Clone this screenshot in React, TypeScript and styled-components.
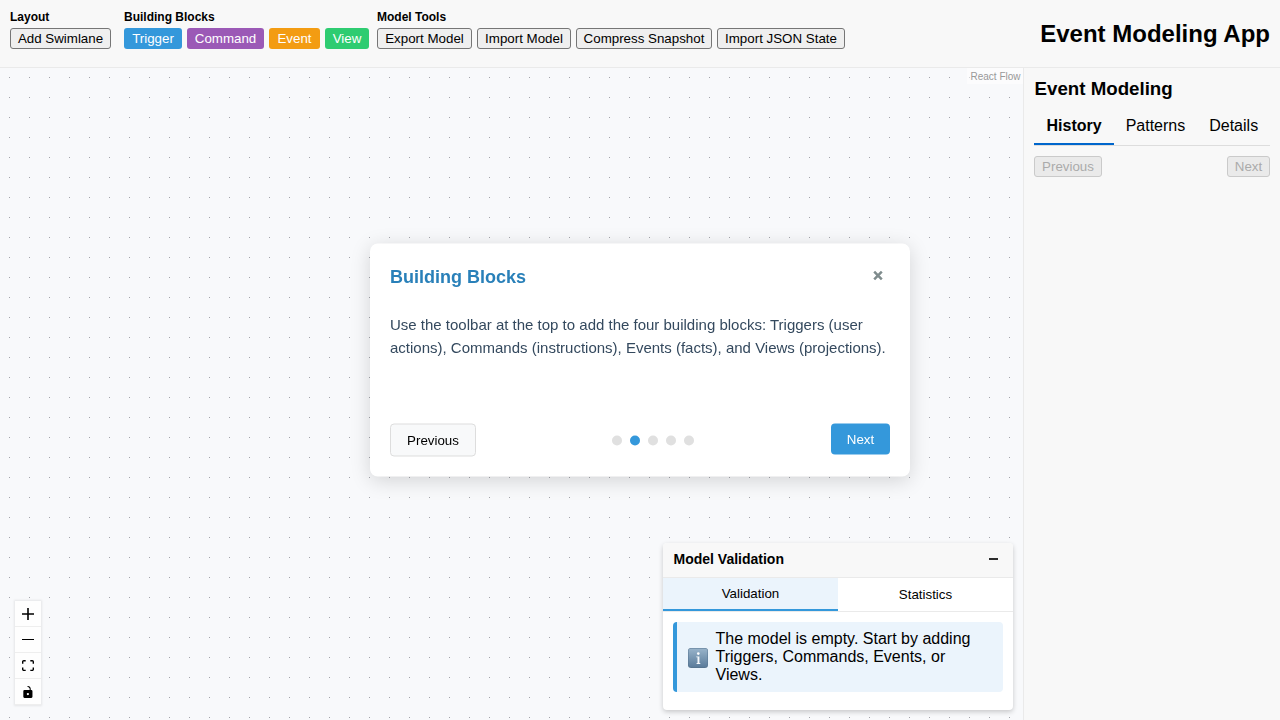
import React from "react";
import styled, { createGlobalStyle, css } from "styled-components";

const GlobalStyle = createGlobalStyle`
  * { box-sizing: border-box; }
  body {
    margin: 0;
    overflow: hidden;
    color: #000;
    font-family: "Liberation Sans", Arial, sans-serif;
    font-size: 16px;
  }
  button { font-family: inherit; margin: 0; color: inherit; white-space: nowrap; }
`;

const AppShell = styled.div`
  display: flex;
  flex-direction: column;
  width: 100vw;
  height: 100vh;
`;

const Header = styled.header`
  display: flex;
  justify-content: space-between;
  height: 68px;
  padding: 10px;
  background: #f8f8f8;
  border-bottom: 1px solid #eaeaea;
`;

const Toolbar = styled.div`
  display: flex;
`;

const ToolGroup = styled.div<{ $gap: number }>`
  margin-right: ${(p) => p.$gap}px;
`;

const GroupLabel = styled.div`
  height: 18px;
  font-size: 12px;
  font-weight: bold;
  line-height: 14px;
`;

const ButtonRow = styled.div`
  display: flex;
  gap: 5px;
`;

const ToolButton = styled.button<{ $width: number; $color?: string }>`
  width: ${(p) => p.$width}px;
  height: 21px;
  padding: 0;
  font-size: 13.333px;
  line-height: 19px;
  border-radius: 3px;
  border: 1px solid #767676;
  background: #efefef;
  ${(p) =>
    p.$color &&
    css`
      border: 0;
      color: #fff;
      background: ${p.$color};
      line-height: 21px;
    `}
  &:disabled {
    color: #aaa;
    background: #eaeaea;
    border-color: #cacaca;
  }
`;

const AppTitle = styled.h1`
  margin: 0;
  font-size: 24px;
  line-height: 47px;
`;

const Main = styled.main`
  display: flex;
  flex: 1;
  min-height: 0;
`;

const Canvas = styled.section`
  position: relative;
  flex: 1;
  background-color: #f8f9fb;
  background-image: radial-gradient(circle at 9.5px 9.5px, #a3a4aa 0.6px, transparent 0.7px);
  background-size: 20px 20px;
`;

const Attribution = styled.div`
  position: absolute;
  top: 0;
  right: 0;
  height: 16px;
  padding: 2px 2.5px 2px 3px;
  font-size: 10px;
  line-height: 13px;
  color: #999;
  background: rgba(255, 255, 255, 0.5);
`;

const Controls = styled.div`
  position: absolute;
  left: 15px;
  bottom: 15px;
  display: flex;
  flex-direction: column;
  box-shadow: 0 0 2px 1px rgba(0, 0, 0, 0.08);
`;

const ControlButton = styled.button`
  display: flex;
  align-items: center;
  justify-content: center;
  width: 26px;
  height: 26px;
  padding: 5px;
  border: 0;
  border-bottom: 1px solid #eee;
  background: #fefefe;
  svg { width: 100%; max-width: 12px; max-height: 12px; }
`;

const Sidebar = styled.aside`
  width: 257px;
  padding: 10px;
  background: #f8f8f8;
  border-left: 1px solid #eaeaea;
`;

const SidebarTitle = styled.h3`
  margin: 0 0 9px;
  padding-left: 0.5px;
  font-size: 18.72px;
  line-height: 21px;
`;

const SidebarTabs = styled.div`
  display: flex;
  height: 38px;
  border-bottom: 1px solid #ddd;
`;

const SidebarTab = styled.div<{ $active?: boolean }>`
  height: 37px;
  padding: 8px 12px;
  line-height: 19px;
  ${(p) =>
    p.$active &&
    css`
      width: 80px;
      padding-left: 12.5px;
      font-weight: bold;
      border-bottom: 2px solid #0066cc;
    `}
`;

const HistoryNav = styled.div`
  display: flex;
  justify-content: space-between;
  margin-top: 10px;
`;

const ValidationPanel = styled.div`
  position: absolute;
  right: 10px;
  bottom: 10px;
  width: 350px;
  height: 167px;
  overflow: hidden;
  border-radius: 4px;
  background: #fff;
  box-shadow: 0 2px 5px rgba(0, 0, 0, 0.2);
`;

const PanelHeader = styled.div`
  display: flex;
  align-items: center;
  justify-content: space-between;
  height: 35px;
  padding: 0 15px 2px 10.5px;
  background: #f8f8f8;
  border-bottom: 1px solid #eaeaea;
  font-size: 14px;
  font-weight: bold;
`;

const MinimizeMark = styled.span`
  width: 9px;
  height: 2px;
  background: #2c2c2c;
`;

const PanelTabs = styled.div`
  display: flex;
  height: 34px;
  border-bottom: 1px solid #eaeaea;
`;

const PanelTab = styled.button<{ $active?: boolean }>`
  flex: 1;
  padding: 0;
  border: 0;
  border-bottom: ${(p) => (p.$active ? "2px solid #3498db" : "0")};
  background: ${(p) => (p.$active ? "#ebf4fc" : "#fff")};
  font-size: 13.333px;
`;

const Message = styled.div`
  display: flex;
  align-items: center;
  gap: 7.5px;
  height: 70px;
  margin: 10px;
  padding: 0 24px 0 11px;
  border-left: 4px solid #3498db;
  border-radius: 4px;
  background: #ebf4fc;
  line-height: 18px;
  svg { flex: none; margin-top: 2px; }
`;

const Tutorial = styled.div`
  position: fixed;
  top: 50%;
  left: 50%;
  transform: translate(-50%, -50%);
  display: flex;
  flex-direction: column;
  width: 540px;
  height: 233px;
  padding: 20px;
  border-radius: 8px;
  background: #fff;
  box-shadow: 0 4px 20px rgba(0, 0, 0, 0.15);
`;

const TutorialHeader = styled.div`
  display: flex;
  align-items: center;
  justify-content: space-between;
  height: 27px;
  padding-right: 7px;
  svg { margin-bottom: 3px; }
`;

const TutorialTitle = styled.h3`
  margin: 0;
  font-size: 18px;
  line-height: 27px;
  color: #2980b9;
`;

const TutorialText = styled.p`
  flex: 1;
  margin: 23px 0 0;
  font-size: 15px;
  line-height: 22.5px;
  color: #34495e;
`;

const TutorialFooter = styled.div`
  display: flex;
  align-items: flex-start;
  justify-content: space-between;
`;

const StepButton = styled.button<{ $primary?: boolean }>`
  width: ${(p) => (p.$primary ? 59 : 86)}px;
  height: ${(p) => (p.$primary ? 31 : 33)}px;
  padding: 0;
  border: ${(p) => (p.$primary ? "0" : "1px solid #ddd")};
  border-radius: 4px;
  color: ${(p) => (p.$primary ? "#fff" : "#000")};
  background: ${(p) => (p.$primary ? "#3498db" : "#f8f9fa")};
  font-size: 13.333px;
`;

const StepDots = styled.div`
  display: flex;
  gap: 8px;
  margin: 12px 2px 0 0;
`;

const StepDot = styled.span<{ $active: boolean }>`
  width: 10px;
  height: 10px;
  border-radius: 50%;
  background: ${(p) => (p.$active ? "#3498db" : "#e0e0e0")};
`;

const blocks = [
  { label: "Trigger", color: "#3498db", width: 58 },
  { label: "Command", color: "#9b59b6", width: 77 },
  { label: "Event", color: "#f39c12", width: 51 },
  { label: "View", color: "#2ecc71", width: 44 },
];

const tools = [
  { label: "Export Model", width: 95 },
  { label: "Import Model", width: 94 },
  { label: "Compress Snapshot", width: 136 },
  { label: "Import JSON State", width: 128 },
];

const controls = [
  { name: "zoom in", box: "0 0 32 32", d: "M32 18.133H18.133V32h-4.266V18.133H0v-4.266h13.867V0h4.266v13.867H32z" },
  { name: "zoom out", box: "0 0 32 5", d: "M0 0h32v4.2H0z" },
  {
    name: "fit view",
    box: "0 0 32 30",
    d: "M3.692 4.63c0-.53.4-.938.939-.938h5.215V0H4.708C2.13 0 0 2.054 0 4.63v5.216h3.692V4.631zM27.354 0h-5.2v3.692h5.17c.53 0 .984.4.984.939v5.215H32V4.631A4.624 4.624 0 0027.354 0zm.954 24.83c0 .532-.4.94-.939.94h-5.215v3.768h5.215c2.577 0 4.631-2.13 4.631-4.707v-5.139h-3.692v5.139zm-23.677.94c-.531 0-.939-.4-.939-.94v-5.138H0v5.139c0 2.577 2.13 4.707 4.708 4.707h5.138V25.77H4.631z",
  },
  {
    name: "toggle interactivity",
    box: "0 0 25 32",
    d: "M21.333 10.667H19.81V7.619C19.81 3.429 16.38 0 12.19 0c-4.114 1.828-1.37 2.133.305 2.438 1.676.305 4.42 2.59 4.42 5.181v3.048H3.047A3.056 3.056 0 000 13.714v15.238A3.056 3.056 0 003.048 32h18.285a3.056 3.056 0 003.048-3.048V13.714a3.056 3.056 0 00-3.048-3.047zM12.19 24.533a3.056 3.056 0 01-3.047-3.047 3.056 3.056 0 013.047-3.048 3.056 3.056 0 013.048 3.048 3.056 3.056 0 01-3.048 3.047z",
  },
];

const InfoIcon = () => (
  <svg width="20" height="20" viewBox="0 0 20 20">
    <defs>
      <linearGradient id="info-fill" x1="0" y1="0" x2="0" y2="1">
        <stop offset="0" stopColor="#98b3ca" />
        <stop offset="1" stopColor="#5b7c9b" />
      </linearGradient>
    </defs>
    <rect width="20" height="20" rx="3.2" fill="#567490" />
    <rect x="0.5" y="0.5" width="19" height="18.5" rx="2.8" fill="url(#info-fill)" />
    <circle cx="10.3" cy="5.6" r="1.3" fill="#fff" />
    <path d="M8.2 8.4h3.2v6.7h.9V16H8.6v-.9h.9V9.3H8.2z" fill="#f4f7fa" />
  </svg>
);

const CloseIcon = () => (
  <svg width="10" height="10" viewBox="0 0 10 10">
    <path d="M1.2 1.2L8.8 8.8M8.8 1.2L1.2 8.8" stroke="#7f8c8d" strokeWidth="2.5" />
  </svg>
);

export default function App() {
  return (
    <AppShell>
      <GlobalStyle />
      <Header>
        <Toolbar>
          <ToolGroup $gap={13}>
            <GroupLabel>Layout</GroupLabel>
            <ToolButton $width={101}>Add Swimlane</ToolButton>
          </ToolGroup>
          <ToolGroup $gap={8}>
            <GroupLabel>Building Blocks</GroupLabel>
            <ButtonRow>
              {blocks.map((b) => (
                <ToolButton key={b.label} $width={b.width} $color={b.color}>{b.label}</ToolButton>
              ))}
            </ButtonRow>
          </ToolGroup>
          <ToolGroup $gap={0}>
            <GroupLabel>Model Tools</GroupLabel>
            <ButtonRow>
              {tools.map((t) => (
                <ToolButton key={t.label} $width={t.width}>{t.label}</ToolButton>
              ))}
            </ButtonRow>
          </ToolGroup>
        </Toolbar>
        <AppTitle>Event Modeling App</AppTitle>
      </Header>
      <Main>
        <Canvas>
          <Attribution>React Flow</Attribution>
          <Controls>
            {controls.map((c) => (
              <ControlButton key={c.name} aria-label={c.name}>
                <svg viewBox={c.box}><path d={c.d} /></svg>
              </ControlButton>
            ))}
          </Controls>
          <ValidationPanel>
            <PanelHeader>
              Model Validation
              <MinimizeMark />
            </PanelHeader>
            <PanelTabs>
              <PanelTab $active>Validation</PanelTab>
              <PanelTab>Statistics</PanelTab>
            </PanelTabs>
            <Message>
              <InfoIcon />
              <span>The model is empty. Start by adding Triggers, Commands, Events, or Views.</span>
            </Message>
          </ValidationPanel>
        </Canvas>
        <Sidebar>
          <SidebarTitle>Event Modeling</SidebarTitle>
          <SidebarTabs>
            <SidebarTab $active>History</SidebarTab>
            <SidebarTab>Patterns</SidebarTab>
            <SidebarTab>Details</SidebarTab>
          </SidebarTabs>
          <HistoryNav>
            <ToolButton $width={68} disabled>Previous</ToolButton>
            <ToolButton $width={43} disabled>Next</ToolButton>
          </HistoryNav>
        </Sidebar>
      </Main>
      <Tutorial>
        <TutorialHeader>
          <TutorialTitle>Building Blocks</TutorialTitle>
          <CloseIcon />
        </TutorialHeader>
        <TutorialText>
          Use the toolbar at the top to add the four building blocks: Triggers (user actions), Commands
          (instructions), Events (facts), and Views (projections).
        </TutorialText>
        <TutorialFooter>
          <StepButton>Previous</StepButton>
          <StepDots>
            {[0, 1, 2, 3, 4].map((i) => (
              <StepDot key={i} $active={i === 1} />
            ))}
          </StepDots>
          <StepButton $primary>Next</StepButton>
        </TutorialFooter>
      </Tutorial>
    </AppShell>
  );
}
